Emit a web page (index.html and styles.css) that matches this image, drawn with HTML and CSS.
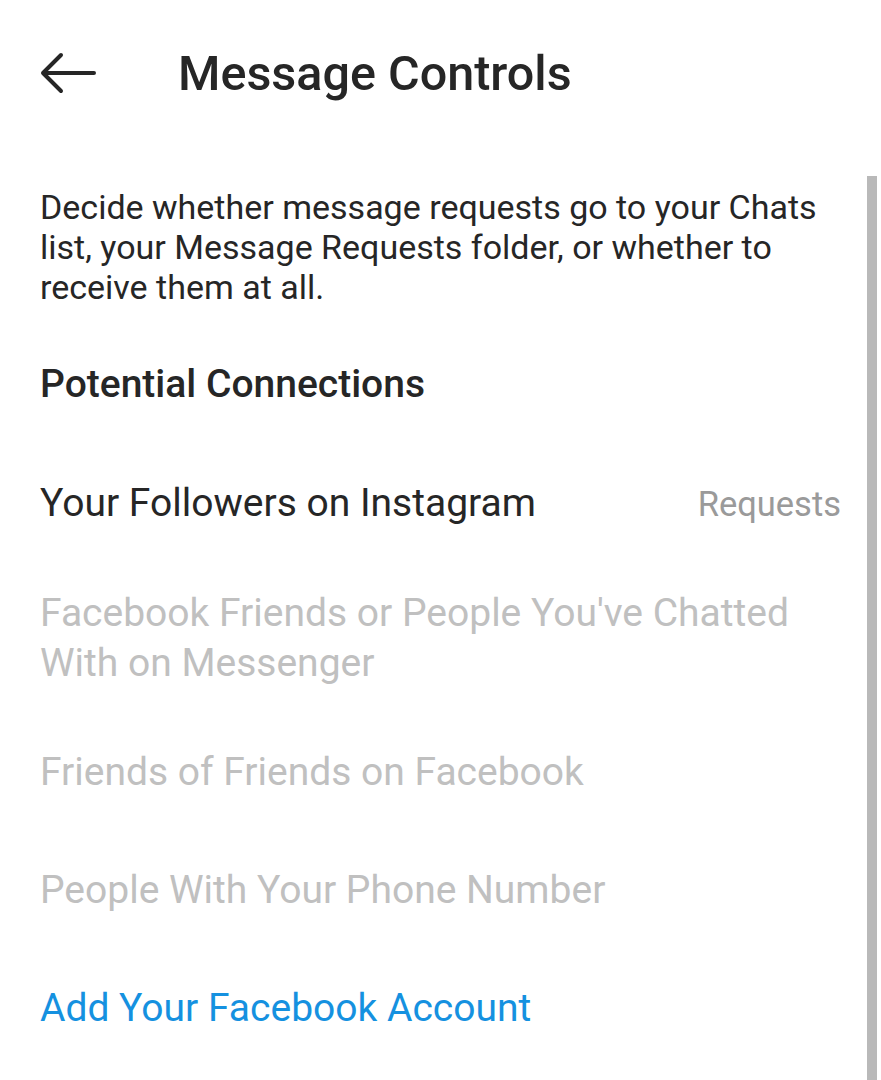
FILE: index.html
```html
<!DOCTYPE html>
<html lang="en">
<head>
    <meta charset="UTF-8">
    <meta name="viewport" content="width=device-width, initial-scale=1.0">
    <title>Message Controls</title>

    <link rel="stylesheet" href="styles.css">
</head>

<body>

    <!-- Top Bar -->
    <header class="topbar">
        <button class="back-btn" aria-label="Back">
            <svg width="56" height="42" viewBox="0 0 56 42">
                <path d="M54 21H3M21 3L3 21l18 18" fill="none" stroke="#262626" stroke-width="4" stroke-linecap="round" stroke-linejoin="round"/>
            </svg>
        </button>
        <h1 class="title">Message Controls</h1>
    </header>

    <!-- Content -->
    <main class="content">
        <p class="intro">Decide whether message requests go to your Chats list, your Message Requests folder, or whether to receive them at all.</p>

        <h2 class="section-title">Potential Connections</h2>

        <ul class="options">
            <li class="option compact">
                <span class="option-label">Your Followers on Instagram</span>
                <span class="option-value">Requests</span>
            </li>
            <li class="option compact disabled">
                <span class="option-label">Facebook Friends or People You've Chatted With on Messenger</span>
            </li>
            <li class="option disabled">
                <span class="option-label">Friends of Friends on Facebook</span>
            </li>
            <li class="option disabled">
                <span class="option-label">People With Your Phone Number</span>
            </li>
        </ul>

        <a class="link" href="#">Add Your Facebook Account</a>
    </main>

    <div class="scrollbar"></div>

</body>
</html>
```

FILE: styles.css
```css
/* ===== General ===== */
body {
    margin: 0;
    padding: 0;
    background: #ffffff;
    font-family: Roboto, "Noto Sans", Arial, sans-serif;
    color: #262626;
    overflow: hidden;
}

/* ===== Top Bar ===== */
.topbar {
    display: flex;
    align-items: center;
    height: 146px;
    padding: 0 0 0 40px;
    box-sizing: border-box;
}

.back-btn {
    background: none;
    border: none;
    padding: 0;
    display: flex;
    cursor: pointer;
}

.title {
    margin: 0 0 0 82px;
    font-size: 48.5px;
    font-weight: 500;
    color: #262626;
}

/* ===== Content ===== */
.content {
    padding: 0 40px;
}

.intro {
    margin: 41px 0 0;
    font-size: 34px;
    line-height: 40px;
}

.section-title {
    margin: 54px 0 0;
    font-size: 39px;
    line-height: 46px;
    font-weight: 500;
}

/* ===== Options ===== */
.options {
    list-style: none;
    margin: 71px 0 0;
    padding: 0;
}

.option {
    display: flex;
    justify-content: space-between;
    align-items: baseline;
    font-size: 39px;
    line-height: 50px;
    margin-bottom: 68px;
}

.option.compact {
    margin-bottom: 59px;
}

.option.disabled {
    color: #c0c0c0;
}

.option-value {
    font-size: 34.5px;
    color: #9a9a9a;
}

.link {
    display: block;
    font-size: 39px;
    line-height: 50px;
    color: #1591e0;
    text-decoration: none;
}

/* ===== Scrollbar ===== */
.scrollbar {
    position: fixed;
    top: 176px;
    right: 4px;
    bottom: 0;
    width: 10px;
    background: #b9b9b9;
}
```
